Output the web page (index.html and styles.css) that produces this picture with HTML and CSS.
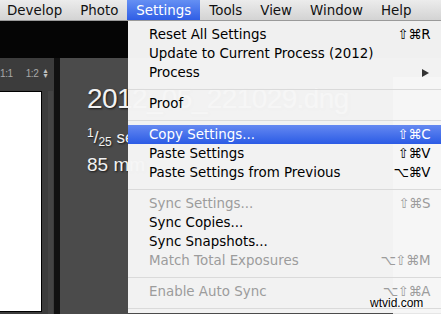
FILE: index.html
```html
<!DOCTYPE html>
<html>
<head>
<meta charset="utf-8">
<link rel="stylesheet" href="styles.css">
</head>
<body>
<div class="screen">
  <div class="menubar">
    <span class="mb-item first">Develop</span>
    <span class="mb-item">Photo</span>
    <span class="mb-item active">Settings</span>
    <span class="mb-item">Tools</span>
    <span class="mb-item">View</span>
    <span class="mb-item">Window</span>
    <span class="mb-item">Help</span>
  </div>
  <div class="window">
    <div class="topstrip"></div>
    <div class="panels">
      <div class="leftpanel">
        <div class="zoomctrl"><span class="z1">1:1</span><span class="z2">1:2</span><span class="updown"><span>▴</span><span>▾</span></span></div>
        <div class="filmrow">
          <div class="filmbox"></div>
          <div class="track"></div>
        </div>
      </div>
      <div class="divider"></div>
      <div class="main">
        <div class="info">
          <div class="fname">2012_05_221029.dng</div>
          <div class="exp"><sup>1</sup>/<sub>25</sub> sec</div>
          <div class="lens">85 mm</div>
        </div>
        <div class="photo"></div>
      </div>
    </div>
  </div>
  <div class="menu">
    <div class="row"><span>Reset All Settings</span><span class="sc">⇧⌘R</span></div>
    <div class="row"><span>Update to Current Process (2012)</span></div>
    <div class="row"><span>Process</span><span class="arrow"></span></div>
    <div class="sep"></div>
    <div class="row"><span>Proof</span></div>
    <div class="sep"></div>
    <div class="row hl"><span>Copy Settings...</span><span class="sc">⇧⌘C</span></div>
    <div class="row"><span>Paste Settings</span><span class="sc">⇧⌘V</span></div>
    <div class="row"><span>Paste Settings from Previous</span><span class="sc">⌥⌘V</span></div>
    <div class="sep"></div>
    <div class="row dis"><span>Sync Settings...</span><span class="sc">⇧⌘S</span></div>
    <div class="row"><span>Sync Copies...</span></div>
    <div class="row"><span>Sync Snapshots...</span></div>
    <div class="row dis"><span>Match Total Exposures</span><span class="sc">⌥⇧⌘M</span></div>
    <div class="sep"></div>
    <div class="row dis"><span>Enable Auto Sync</span><span class="sc">⌥⇧⌘A</span></div>
    <div class="sep"></div>
  </div>
  <div class="watermark">wtvid.com</div>
</div>
</body>
</html>
```
FILE: styles.css
```css
html, body {
  margin: 0;
  padding: 0;
  width: 441px;
  height: 314px;
  overflow: hidden;
  background: #000;
}
.screen {
  position: relative;
  width: 441px;
  height: 314px;
  overflow: hidden;
  font-family: "DejaVu Sans", sans-serif;
}
.menubar {
  height: 21px;
  display: flex;
  align-items: stretch;
  background: linear-gradient(#ececec, #d3d3d3);
  border-bottom: 1px solid #9a9a9a;
  box-sizing: border-box;
  font-size: 13.4px;
  line-height: 21px;
  color: #111;
}
.mb-item {
  padding: 0 9px;
}
.mb-item.first {
  margin-left: -2px;
}
.mb-item.active {
  background: linear-gradient(#6590f3, #2f5ee5);
  color: #fff;
}
.window {
  height: 293px;
  display: flex;
  flex-direction: column;
}
.topstrip {
  height: 37px;
  background: #050505;
  flex: none;
}
.panels {
  flex: 1;
  display: grid;
  grid-template-columns: 54px 6px minmax(0, 1fr);
}
.leftpanel {
  background: #3c3c3c;
  display: flex;
  flex-direction: column;
}
.zoomctrl {
  height: 33px;
  display: flex;
  align-items: center;
  white-space: nowrap;
  font-family: "Liberation Sans", sans-serif;
  font-size: 10px;
  letter-spacing: -0.4px;
  color: #a8a8a8;
  box-sizing: border-box;
  padding-bottom: 3px;
}
.z2 {
  margin-left: 13px;
}
.updown {
  display: flex;
  flex-direction: column;
  margin-left: 5px;
  font-family: "DejaVu Sans", sans-serif;
  font-size: 8px;
  line-height: 5px;
  letter-spacing: 0;
  color: #c0c0c0;
}
.filmrow {
  flex: 1;
  display: flex;
}
.filmbox {
  width: 43px;
  margin-left: -1px;
  height: 221px;
  background: #fff;
  border: 1px solid #000;
  box-sizing: border-box;
}
.track {
  margin-left: 6px;
  width: 5px;
  background: #444;
}
.divider {
  background: #111;
}
.main {
  background: #4b4b4b;
  display: flex;
  overflow: hidden;
}
.info {
  flex: none;
  box-sizing: border-box;
  width: 333px;
  padding: 25px 0 0 27px;
  color: #f2f2f2;
  font-family: "Liberation Sans", sans-serif;
  text-shadow: 1px 1px 2px rgba(0,0,0,0.7);
  white-space: nowrap;
}
.fname {
  font-size: 28px;
  line-height: 32px;
  letter-spacing: -0.6px;
}
.exp {
  font-size: 17px;
  line-height: 24px;
  margin-top: 6px;
}
.exp sup {
  font-size: 12px;
  vertical-align: 6px;
}
.exp sub {
  font-size: 12px;
  vertical-align: -3px;
}
.lens {
  font-size: 19px;
  line-height: 22px;
}
.photo {
  flex: 1;
  margin-top: 19px;
  background: #e6e6e6;
}
.menu {
  position: absolute;
  left: 128px;
  top: 21px;
  width: 313px;
  padding-top: 4px;
  background: rgba(246, 246, 246, 0.975);
  font-size: 13.4px;
  color: #000;
}
.row {
  height: 19px;
  line-height: 19px;
  display: flex;
  justify-content: space-between;
  align-items: center;
  padding: 0 11px 0 21px;
}
.row.hl {
  background: linear-gradient(#6589f1, #2b5be5);
  color: #fff;
}
.row.dis {
  color: #9c9c9c;
}
.sc {
  letter-spacing: -0.5px;
}
.arrow {
  width: 0;
  height: 0;
  border-top: 4px solid transparent;
  border-bottom: 4px solid transparent;
  border-left: 7px solid #333;
  margin-right: 1px;
}
.sep {
  height: 1px;
  margin: 7px 0 4px;
  background: #dadada;
}
.watermark {
  position: absolute;
  left: 370px;
  top: 296px;
  font-family: "Liberation Sans", sans-serif;
  font-size: 12px;
  color: #000;
  text-shadow: 0 0 2px #fff, 0 0 1px #fff;
}
```
